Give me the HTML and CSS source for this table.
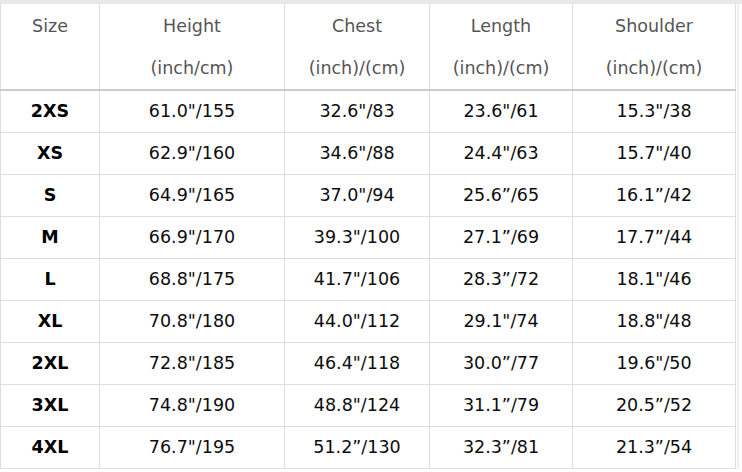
FILE: index.html
```html
<!DOCTYPE html>
<html>
<head>
<meta charset="utf-8">
<link rel="stylesheet" href="styles.css">
</head>
<body>
<div class="topband"></div>
<div class="wrap">
<table class="size-table">
  <colgroup>
    <col class="c-size"><col class="c-height"><col class="c-chest"><col class="c-length"><col class="c-shoulder">
  </colgroup>
  <thead>
    <tr>
      <th><span class="line">Size</span><span class="line">&nbsp;</span></th>
      <th><span class="line">Height</span><span class="line">(inch/cm)</span></th>
      <th><span class="line">Chest</span><span class="line">(inch)/(cm)</span></th>
      <th><span class="line">Length</span><span class="line">(inch)/(cm)</span></th>
      <th><span class="line">Shoulder</span><span class="line">(inch)/(cm)</span></th>
    </tr>
  </thead>
  <tbody>
    <tr><td class="sz">2XS</td><td>61.0"/155</td><td>32.6"/83</td><td>23.6"/61</td><td>15.3"/38</td></tr>
    <tr><td class="sz">XS</td><td>62.9"/160</td><td>34.6"/88</td><td>24.4"/63</td><td>15.7"/40</td></tr>
    <tr><td class="sz">S</td><td>64.9"/165</td><td>37.0"/94</td><td>25.6”/65</td><td>16.1”/42</td></tr>
    <tr><td class="sz">M</td><td>66.9"/170</td><td>39.3"/100</td><td>27.1”/69</td><td>17.7”/44</td></tr>
    <tr><td class="sz">L</td><td>68.8"/175</td><td>41.7"/106</td><td>28.3”/72</td><td>18.1"/46</td></tr>
    <tr><td class="sz">XL</td><td>70.8"/180</td><td>44.0"/112</td><td>29.1"/74</td><td>18.8"/48</td></tr>
    <tr><td class="sz">2XL</td><td>72.8"/185</td><td>46.4"/118</td><td>30.0”/77</td><td>19.6"/50</td></tr>
    <tr><td class="sz">3XL</td><td>74.8"/190</td><td>48.8"/124</td><td>31.1”/79</td><td>20.5”/52</td></tr>
    <tr><td class="sz">4XL</td><td>76.7"/195</td><td>51.2”/130</td><td>32.3”/81</td><td>21.3”/54</td></tr>
  </tbody>
</table>
<div class="edge"></div>
</div>
</body>
</html>
```

FILE: styles.css
```css
html, body {
  margin: 0;
  padding: 0;
  background: #ffffff;
}
body {
  font-family: "DejaVu Sans", "Liberation Sans", sans-serif;
  font-size: 17.5px;
  color: #0d0d0d;
  width: 742px;
  height: 472px;
  overflow: hidden;
}
.topband {
  height: 4px;
  background: #e8e8e8;
}
.wrap {
  display: flex;
  align-items: stretch;
}
.edge {
  width: 2px;
  margin-left: 1px;
  background: #f0f0f0;
}
.size-table {
  border-collapse: collapse;
  table-layout: fixed;
  width: 735px;
  border: 1px solid #dcdcdc;
  border-top: none;
}
.c-size { width: 99px; }
.c-height { width: 185px; }
.c-chest { width: 145px; }
.c-length { width: 143px; }
.c-shoulder { width: 163px; }
th, td {
  border: 1px solid #dedede;
  text-align: center;
  padding: 0;
}
th {
  font-weight: normal;
  color: #555555;
  border-top: none;
  border-bottom: 2px solid #cccccc;
  height: 85px;
  vertical-align: top;
}
th .line {
  display: block;
  height: 42px;
  line-height: 42px;
  padding-top: 1px;
  overflow: hidden;
}
th .line + .line {
  height: 42px;
  line-height: 42px;
  padding-top: 0;
}
td {
  height: 41px;
  line-height: 41px;
}
td.sz {
  font-weight: bold;
  color: #000000;
}
```
